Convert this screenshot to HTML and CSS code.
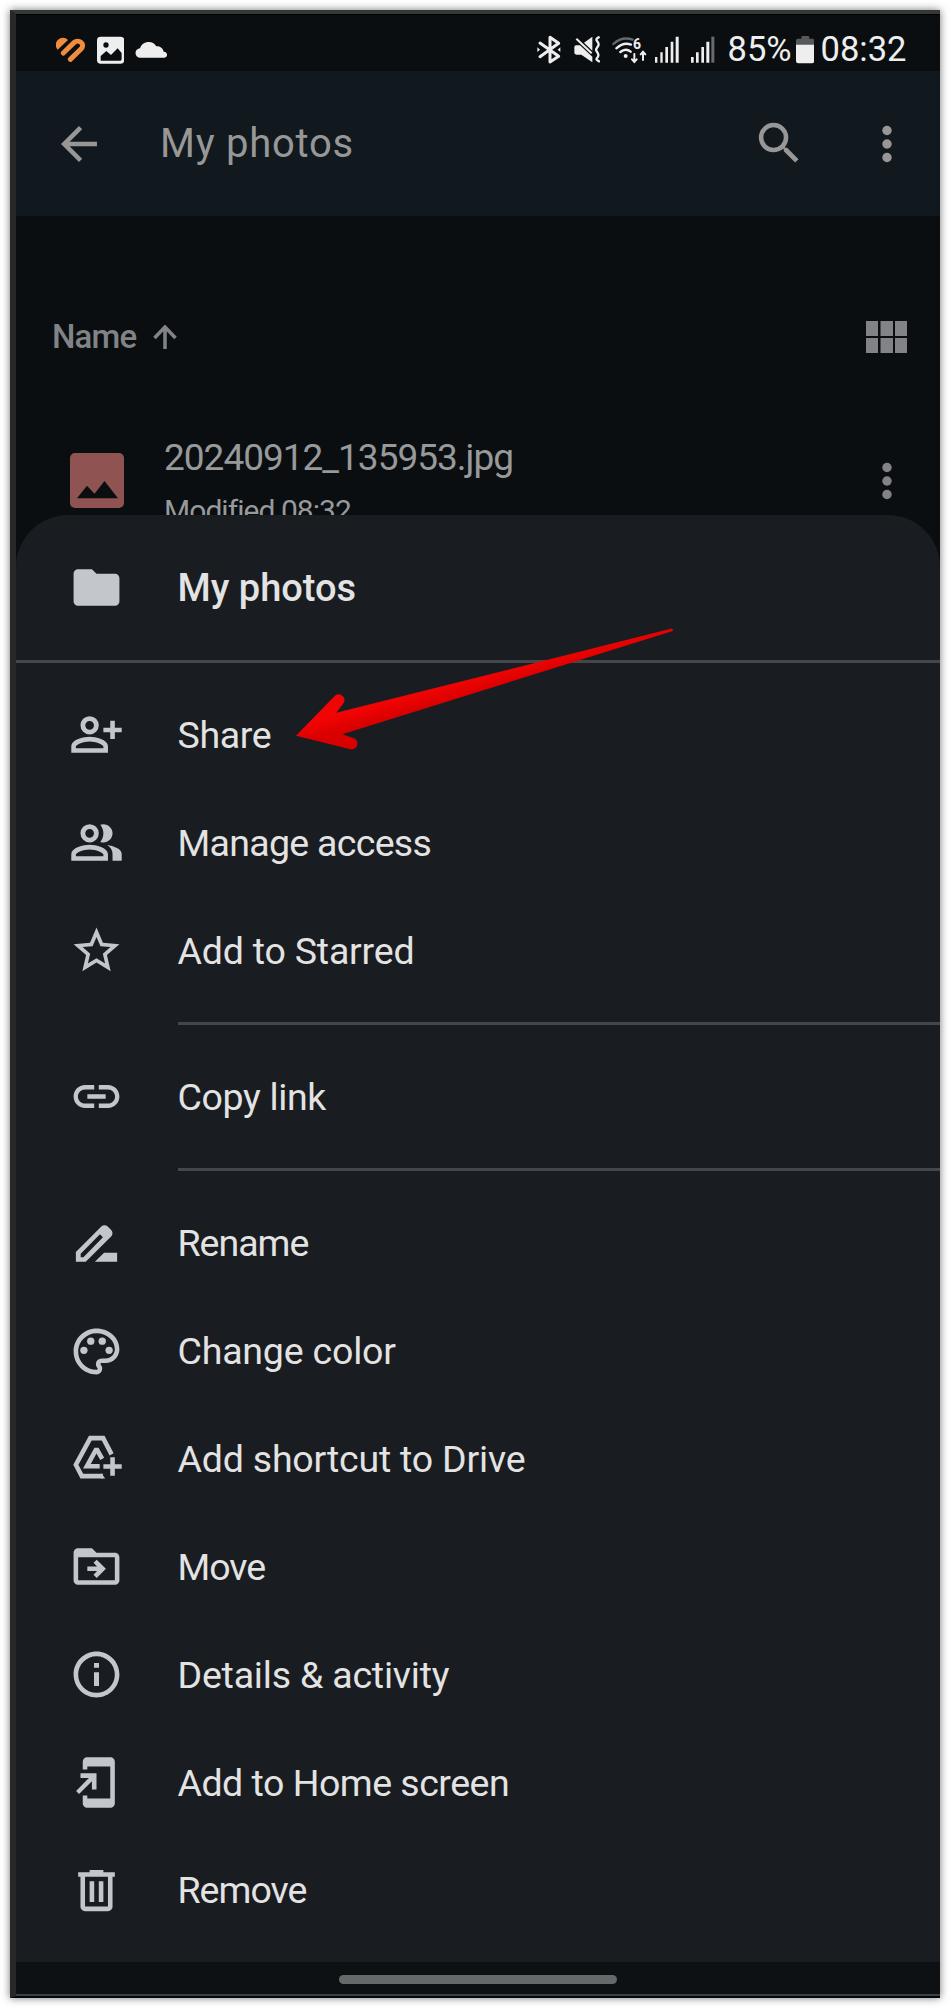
FILE: index.html
```
<!DOCTYPE html>
<html lang="en">
<head>
<meta charset="utf-8">
<title>My photos</title>
<link rel="stylesheet" href="styles.css">
</head>
<body>
<div class="phone">
  <header class="status">
    <svg class="st-heart" viewBox="168 100 87 93" width="29" height="31"><path d="M173 147a20 20 0 0 1 31-29z" fill="#f08c3c"/><path d="M190 157L222 126C236 113 257 131 243 145L211 176" fill="none" stroke="#f08c3c" stroke-width="15" stroke-linecap="round"/></svg>
    <svg class="st-photo" viewBox="290 100 82 93" width="27.3" height="31"><rect x="290" y="108" width="82" height="81" rx="11" fill="#eee"/><circle cx="317" cy="133" r="8" fill="#0a0e11"/><path d="M301 180v-14l17-15 14 12 20-20 12 14v19q0 4-4 4z" fill="#0a0e11"/></svg>
    <svg class="st-cloud" viewBox="404 100 98 93" width="32.7" height="31"><path d="M420 171a14 14 0 0 1-1-28 27 27 0 0 1 49-6c12 0 20 6 22 16a9 9 0 0 1 2 18z" fill="#eee"/></svg>
    <svg class="st-bt" viewBox="110 100 71 93" width="23.7" height="31"><path d="M119 127L175 167 149 184V110L175 128 119 168" fill="none" stroke="#eee" stroke-width="9" stroke-linejoin="round" stroke-linecap="round"/><path d="M111 140l8 7-8 7zM180 140l-8 7 8 7z" fill="#eee"/></svg>
    <svg class="st-mute" viewBox="220 100 80 93" width="26.7" height="31"><path d="M221 139q0-4 5-5h12L275 168v17L242 162h-15q-6-1-6-6zM250 126L275 108v42z" fill="#eee"/><path d="M227 114l46 44" stroke="#eee" stroke-width="6"/><path d="M294 110q-10 5-5 11t5 10-5 10-1 11 5 10-4 10 6 10" fill="none" stroke="#eee" stroke-width="7" stroke-linecap="round"/></svg>
    <svg class="st-wifi" viewBox="336 100 105 93" width="35" height="31"><g fill="none" stroke="#eee" stroke-width="7" stroke-linecap="round"><path d="M340 130q26-24 58-13" stroke="#66696b"/><path d="M349 143q22-20 44-11M361 154q16-13 31-1"/><path d="M403 160v22M396 176l7 8 7-8M429 178v-23M422 161l7-8 7 8" stroke-width="6"/></g><circle cx="377" cy="166" r="6" fill="#eee"/><text x="399" y="144" class="wifi-gen">6</text></svg>
    <svg class="st-signal" viewBox="465 100 71 93" width="23.7" height="31"><path d="M465 169h7v17h-7zM481 155h7v31h-7zM496 139h8v47h-8zM512 123h8v63h-8zM527 108h9v78h-9z" fill="#eee"/></svg>
    <svg class="st-signal" viewBox="573 100 71 93" width="23.7" height="31"><path d="M573 169h8v17h-8zM588 155h8v31h-8zM604 139h8v47h-8zM619 123h9v63h-9z" fill="#eee"/><path d="M634 108h9v78h-9z" fill="#686b6d"/></svg>
    <span class="st-percent">85%</span>
    <svg class="st-battery" viewBox="887 100 55 93" width="18.3" height="31"><path d="M887 134v-14q0-6 6-6h10v-5q0-3 4-3h16q4 0 4 3v5h9q6 0 6 6v14z" fill="#55595b"/><path d="M887 132h55v49q0 7-7 7h-41q-7 0-7-7z" fill="#eee"/></svg>
    <span class="st-time">08:32</span>
  </header>

  <nav class="toolbar">
    <svg class="back" viewBox="0 0 24 24"><path d="M20 11H7.83l5.59-5.59L12 4l-8 8 8 8 1.41-1.41L7.83 13H20z"/></svg>
    <h1 class="toolbar-title">My photos</h1>
    <svg class="search" viewBox="0 0 24 24"><path d="M15.5 14h-.79l-.28-.27A6.47 6.47 0 0 0 16 9.5 6.5 6.5 0 1 0 9.5 16c1.61 0 3.09-.59 4.23-1.57l.27.28v.79l5 4.99L20.49 19zm-6 0a4.5 4.5 0 1 1 0-9 4.5 4.5 0 0 1 0 9z"/></svg>
    <svg class="more" viewBox="0 0 24 24"><circle cx="12" cy="6" r="2.1"/><circle cx="12" cy="12" r="2.1"/><circle cx="12" cy="18" r="2.1"/></svg>
  </nav>

  <main class="files">
    <div class="sort">
      <span class="sort-name">Name</span>
      <svg class="sort-arrow" viewBox="0 0 24 24"><path d="M12 24V2M1.500 13L12 2l10.500 11"/></svg>
      <svg class="grid" viewBox="0 0 41 32"><path d="M0 0h12v15H0zM14.500 0h12.500v15H14.500zM29 0h12v15H29zM0 17h12v15H0zM14.500 17h12.500v15H14.500zM29 17h12v15H29z"/></svg>
    </div>
    <div class="file">
      <svg class="thumb" viewBox="0 0 54 55"><rect fill="#8f5351" width="54" height="55" rx="5"/><path fill="#0a0e11" d="M7 45.300L17 32.700l7.500 8L34.500 28 48 45.300z"/></svg>
      <div class="file-text">
        <div class="file-name">20240912_135953.jpg</div>
        <div class="file-meta">Modified 08:32</div>
      </div>
      <svg class="more file-more" viewBox="0 0 24 24"><circle cx="12" cy="6" r="2.1"/><circle cx="12" cy="12" r="2.1"/><circle cx="12" cy="18" r="2.1"/></svg>
    </div>
  </main>

  <section class="sheet">
    <div class="row sheet-head">
      <svg class="icon" viewBox="0 0 24 24"><path d="M10 4H4c-1.100 0-2 .9-2 2v12c0 1.100.9 2 2 2h16c1.100 0 2-.9 2-2V8c0-1.100-.9-2-2-2h-8z"/></svg>
      <span>My photos</span>
    </div>
    <div class="group">
      <div class="row snug"><svg class="icon" viewBox="0 0 24 24"><path fill-rule="evenodd" d="M9 4a4 4 0 1 0 0 8 4 4 0 0 0 0-8zm0 2.100a1.900 1.900 0 1 1 0 3.800 1.900 1.900 0 0 1 0-3.800zM9 13c-2.670 0-8 1.340-8 4v3h16v-3c0-2.660-5.330-4-8-4zM3 18v-.9C3.200 16.400 6.300 15 9 15s5.800 1.400 6 2.100v.9zM18 6h2v3h3v2h-3v3h-2v-3h-3V9h3z"/></svg><span>Share</span></div>
      <div class="row tight"><svg class="icon" viewBox="0 0 24 24"><path fill-rule="evenodd" d="M9 4a4 4 0 1 0 0 8 4 4 0 0 0 0-8zm0 2.100a1.900 1.900 0 1 1 0 3.800 1.900 1.900 0 0 1 0-3.800zM9 13c-2.670 0-8 1.340-8 4v3h16v-3c0-2.660-5.330-4-8-4zM3 18v-.9C3.200 16.400 6.300 15 9 15s5.800 1.400 6 2.100v.9zM15 12c2.210 0 4-1.790 4-4s-1.790-4-4-4c-.47 0-.91.1-1.330.24C14.500 5.270 15 6.580 15 8s-.5 2.730-1.330 3.760c.42.14.86.24 1.330.24zM16.670 13.130C18.040 14.060 19 15.320 19 17v3h4v-3c0-2.180-3.570-3.470-6.330-3.870z"/></svg><span>Manage access</span></div>
      <div class="row"><svg class="icon" viewBox="0 0 24 24"><path fill-rule="evenodd" d="M22 9.240l-7.190-.62L12 2 9.190 8.630 2 9.240l5.460 4.730L5.820 21 12 17.270 18.180 21l-1.630-7.030zM12 15.400l-3.760 2.270 1-4.280-3.320-2.880 4.380-.38L12 6.100l1.710 4.040 4.380.38-3.320 2.880 1 4.280z"/></svg><span>Add to Starred</span></div>
    </div>
    <div class="group inset">
      <div class="row snug"><svg class="icon" viewBox="0 0 24 24"><path d="M3.900 12c0-1.710 1.390-3.100 3.100-3.100h4V7H7c-2.760 0-5 2.240-5 5s2.240 5 5 5h4v-1.900H7c-1.710 0-3.100-1.390-3.100-3.100zM8 13h8v-2H8zM17 7h-4v1.900h4c1.710 0 3.100 1.390 3.100 3.100s-1.390 3.100-3.100 3.100h-4V17h4c2.760 0 5-2.240 5-5s-2.240-5-5-5z"/></svg><span>Copy link</span></div>
    </div>
    <div class="group inset">
      <div class="row tighter"><svg class="icon" viewBox="0 0 24 24"><path fill-rule="evenodd" d="M3 20v-4.300L14.100 4.600a2 2 0 0 1 2.800 0l1.500 1.500a2 2 0 0 1 0 2.800L7.300 20zM5.100 18v-1.500L13.500 8l1.300 1.300L6.300 18zM11.300 20l4-4H21v4z"/></svg><span>Rename</span></div>
      <div class="row"><svg class="icon" viewBox="0 0 24 24"><path d="M12 22C6.490 22 2 17.510 2 12S6.490 2 12 2s10 4.040 10 9c0 3.310-2.690 6-6 6h-1.770c-.28 0-.5.22-.5.5 0 .12.05.23.13.33.41.47.64 1.060.64 1.670A2.500 2.500 0 0 1 12 22zm0-18c-4.410 0-8 3.590-8 8s3.590 8 8 8c.28 0 .5-.22.5-.5a.54.54 0 0 0-.14-.35c-.41-.46-.63-1.050-.63-1.650a2.500 2.500 0 0 1 2.500-2.500H16c2.210 0 4-1.790 4-4 0-3.860-3.590-7-8-7z"/><circle cx="6.500" cy="11.500" r="1.600"/><circle cx="9.500" cy="7.500" r="1.600"/><circle cx="14.500" cy="7.500" r="1.600"/><circle cx="17.500" cy="11.500" r="1.600"/></svg><span>Change color</span></div>
      <div class="row"><svg class="icon" viewBox="0 0 24 24"><path class="line" d="M18.600 10.200L14.900 3.100H9.300L3 14.700l2.600 5H14.800M14.500 12.200L12.300 8.300h-.6L7.800 15.400H13.400"/><path d="M14 18.700h.3l1.500 2H14zM18 11.500h2v3h3v2h-3v3h-2v-3h-3v-2h3z"/></svg><span>Add shortcut to Drive</span></div>
      <div class="row tighter"><svg class="icon" viewBox="0 0 24 24"><path fill-rule="evenodd" d="M20 6h-8l-2-2H4c-1.100 0-2 .9-2 2v12c0 1.100.9 2 2 2h16c1.100 0 2-.9 2-2V8c0-1.100-.9-2-2-2zm0 12H4V8h16zM12.100 9l4 4-4 4-1.400-1.400 1.550-1.600H8v-2h4.250l-1.550-1.600z"/></svg><span>Move</span></div>
      <div class="row"><svg class="icon" viewBox="0 0 24 24"><path d="M10.900 7h2.200v2h-2.200zM10.900 11h2.200v6h-2.200zM12 2C6.480 2 2 6.480 2 12s4.480 10 10 10 10-4.480 10-10S17.520 2 12 2zm0 18c-4.410 0-8-3.590-8-8s3.590-8 8-8 8 3.590 8 8-3.590 8-8 8z"/></svg><span>Details &amp; activity</span></div>
      <div class="row snug"><svg class="icon" viewBox="0 0 24 24"><path d="M18 1H8C6.900 1 6 1.900 6 3v3.300h2V5h10v14H8v-1.300H6V21c0 1.100.9 2 2 2h10c1.100 0 2-.9 2-2V3c0-1.100-.9-2-2-2zM5 8h7v7h-2v-3.600L4.400 17 3.100 15.700 8.700 10H5z"/></svg><span class="home-label">Add to Home screen</span></div>
      <div class="row tighter"><svg class="icon" viewBox="0 0 24 24"><path fill-rule="evenodd" d="M15 4V3H9v1H4v2h1v13c0 1.100.9 2 2 2h10c1.100 0 2-.9 2-2V6h1V4zM7 6h10v13H7zM9 8h2v9H9zM13 8h2v9h-2z"/></svg><span>Remove</span></div>
    </div>
  </section>

  <footer class="navbar"><div class="handle"></div></footer>

  <svg class="pointer" viewBox="290 620 390 135" width="390" height="135">
    <defs><linearGradient id="red" gradientUnits="userSpaceOnUse" x1="337" y1="715" x2="341.500" y2="731"><stop offset="0" stop-color="#f30404"/><stop offset="1" stop-color="#d90000"/></linearGradient></defs>
    <path fill="url(#red)" d="M296 735.700L335.200 695.600A5.700 5.700 0 0 1 343.400 703.300L336.300 712.800 671.800 628.600Q673.500 629.600 672.800 631L342.300 734.300 353.800 738.300A5.700 5.700 0 0 1 350.600 749.200Z"/>
  </svg>
</div>
</body>
</html>
```
FILE: styles.css
```
* { box-sizing: border-box; }

body {
  margin: 0;
  padding: 10px;
  background: #fff;
  font-family: Roboto, "Liberation Sans", sans-serif;
}

.phone {
  position: relative;
  display: flex;
  flex-direction: column;
  width: 930px;
  height: 1988px;
  background: #0a0e11;
  border-top: 4px solid #343838;
  border-left: 6px solid #282828;
  border-bottom: 2px solid #04070c;
  box-shadow: 0 0 8px rgba(0, 0, 0, .55);
}

svg { display: block; flex: none; }

/* Status bar */
.status {
  display: flex;
  height: 57px;
  padding: 19.3px 33.500px 0 40px;
  border-top: 1px solid #000;
  color: #eee;
  font-size: 34.500px;
  line-height: 31px;
}
.st-photo { margin-left: 11.700px; }
.st-cloud { margin-left: 10.700px; }
.st-bt { margin-left: auto; }
.st-mute { margin-left: 13px; }
.st-wifi { margin-left: 12px; }
.st-signal { margin-left: 8px; }
.st-signal + .st-signal { margin-left: 12.300px; }
.st-percent { margin-left: 12.500px; }
.st-battery { margin-left: 4.200px; }
.st-time { margin-left: 6.500px; }
.wifi-gen { font-size: 42px; font-weight: 700; fill: #eee; }

/* Toolbar */
.toolbar {
  display: flex;
  align-items: center;
  height: 145px;
  padding: 0 26.500px 0 36px;
  background: #11181e;
  fill: #979797;
}
.back { width: 54px; height: 54px; }
.toolbar-title {
  flex: 1;
  margin: 0 0 0 54px;
  color: #979797;
  font-size: 40px;
  font-weight: 400;
  letter-spacing: .75px;
}
.search { width: 54.500px; height: 54.500px; margin-right: 53.500px; }
.more { width: 54px; height: 54px; }

/* File list */
.files {
  height: 299px;
  overflow: hidden;
  color: #97999a;
  fill: #818387;
}
.sort {
  display: flex;
  align-items: center;
  height: 208px;
  padding: 33.400px 33px 0 36px;
}
.sort-name {
  font-size: 33px;
  font-weight: 500;
  letter-spacing: -.8px;
  color: #818387;
}
.sort-arrow {
  width: 24px;
  height: 24px;
  margin-left: 16.500px;
  fill: none;
  stroke: #818387;
  stroke-width: 3.500;
}
.grid { width: 41px; height: 32px; margin-left: auto; }
.file { display: flex; padding: 11px 26.500px 0 53.500px; }
.thumb { width: 54px; height: 55px; margin-top: 18px; }
.file-text { flex: 1; margin-left: 40.500px; white-space: nowrap; }
.file-name { font-size: 37px; line-height: 46px; letter-spacing: -1px; }
.file-meta { margin-top: 11px; font-size: 30px; line-height: 38px; letter-spacing: -.95px; }
.file-more { margin-top: 18.500px; }

/* Bottom sheet */
.sheet {
  height: 1447px;
  background: #191c20;
  border-radius: 52px 52px 0 0;
  color: #e3e3e3;
  fill: #c3c7cc;
}
.row {
  display: flex;
  align-items: center;
  gap: 53.500px;
  height: 107.850px;
  padding-left: 53px;
  font-size: 37.500px;
  letter-spacing: -.2px;
}
.snug { letter-spacing: -.35px; }
.tight { letter-spacing: -.7px; }
.tighter { letter-spacing: -1px; }
.home-label { letter-spacing: -.5px; }
.sheet-head {
  height: 145px;
  font-size: 38px;
  font-weight: 500;
  letter-spacing: 0;
}
.icon { width: 55px; height: 55px; }
.line { fill: none; stroke: #c3c7cc; stroke-width: 2; }
.group { padding: 18px 0; border-top: 3px solid #43474b; }
.group.inset {
  border-top: 0;
  background: linear-gradient(#43474b, #43474b) 162px 0 / 762px 3px no-repeat;
  padding-top: 21px;
}
.group:not(:last-child) { padding-bottom: 17.500px; }

/* Gesture bar */
.navbar {
  flex: 1;
  display: flex;
  align-items: center;
  justify-content: center;
  background: #0d1113;
  border-bottom: 2px solid #3d4142;
}
.handle {
  width: 278px;
  height: 9px;
  margin-top: 2px;
  border-radius: 5px;
  background: #656969;
}

/* Pointer arrow laid over the menu */
.pointer { position: absolute; left: 274px; top: 606px; }
```
